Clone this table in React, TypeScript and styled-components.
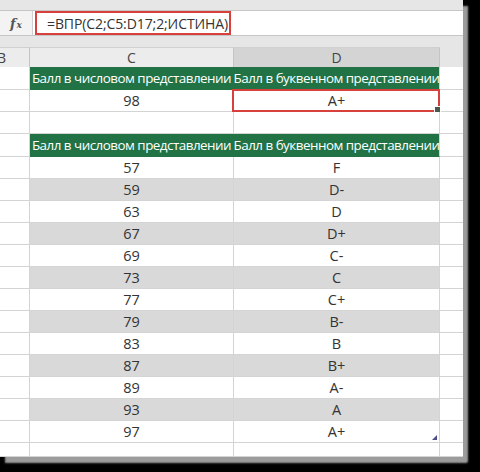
import React from "react";
import styled, { createGlobalStyle } from "styled-components";

const Global = createGlobalStyle`
  html, body { margin: 0; padding: 0; background: #000; }
  body { font-family: "Open Sans", "Noto Sans", sans-serif; }
`;

const Stage = styled.div`
  width: 480px;
  height: 472px;
  background: #000;
  overflow: hidden;
`;

const Panel = styled.div`
  width: 463px;
  height: 457px;
  background: #fff;
  display: flex;
  flex-direction: column;
  overflow: hidden;
  box-shadow: 5px 6px 2px #9c9c9c;
  border-bottom-right-radius: 2px;
`;

const TopBand = styled.div`
  height: 10px;
  background: #e6e6e6;
  border-bottom: 1px solid #c6c6c6;
  flex: none;
`;

const FormulaBar = styled.div`
  height: 24px;
  display: flex;
  flex: none;
  border-bottom: 1px solid #c6c6c6;
`;

const FxCell = styled.div`
  width: 33px;
  background: #f3f3f3;
  border-right: 1px solid #d0d0d0;
  display: flex;
  align-items: center;
  justify-content: center;
  color: #555;
  font-family: "DejaVu Serif", "Liberation Serif", serif;
  font-style: italic;
  font-weight: bold;
  font-size: 13px;
  padding-top: 1px;
  box-sizing: border-box;
`;

const FxX = styled.span`
  font-size: 9px;
  margin-left: 1px;
  margin-top: 3px;
`;

const FormulaArea = styled.div`
  flex: 1;
  background: #fff;
  padding-left: 2px;
  display: flex;
  align-items: stretch;
`;

const FormulaBox = styled.div`
  width: 196px;
  box-sizing: border-box;
  border: 2px solid #d8403c;
  display: flex;
  align-items: center;
  padding-left: 10px;
  font-size: 14px;
  letter-spacing: -0.1px;
  color: #333;
  white-space: nowrap;
`;

const Strip = styled.div`
  height: 11px;
  background: #e6e6e6;
  flex: none;
`;

const Cols = "30px 204px 206px 1fr";

const HeaderRow = styled.div`
  display: grid;
  grid-template-columns: ${Cols};
  height: 20px;
  flex: none;
  background: #e6e6e6;
`;

const ColHead = styled.div<{ $selected?: boolean; $empty?: boolean }>`
  background: ${(p) => (p.$selected ? "#d4d4d4" : p.$empty ? "#e6e6e6" : "#ececec")};
  border-right: ${(p) => (p.$empty ? "none" : "1px solid #c4c4c4")};
  border-top: ${(p) => (p.$empty ? "none" : "1px solid #d0d0d0")};
  color: #444;
  font-size: 14px;
  line-height: 19px;
  text-align: center;
  box-sizing: border-box;
  overflow: hidden;
`;

const ColHeadB = styled(ColHead)`
  text-align: left;
  text-indent: -3px;
`;

type Variant = "head" | "plain" | "band";

const Row = styled.div<{ $h: number }>`
  display: grid;
  grid-template-columns: ${Cols};
  height: ${(p) => p.$h}px;
  flex: none;
`;

const FillRow = styled(Row)`
  flex: 1;
  height: auto;
`;

const Cell = styled.div<{ $v: Variant; $edge?: boolean }>`
  position: relative;
  box-sizing: border-box;
  border-bottom: 1px solid ${(p) => (p.$v === "head" ? "#217346" : "#d4d4d4")};
  border-right: 1px solid
    ${(p) => (p.$v === "head" && !p.$edge ? "#217346" : "#d4d4d4")};
  background: ${(p) =>
    p.$v === "head" ? "#217346" : p.$v === "band" ? "#d9d9d9" : "#fff"};
  color: ${(p) => (p.$v === "head" ? "#fff" : "#333")};
  font-size: ${(p) => (p.$v === "head" ? "13.4px" : "14.5px")};
  letter-spacing: ${(p) => (p.$v === "head" ? "-0.5px" : "0")};
  display: flex;
  align-items: center;
  justify-content: center;
  white-space: nowrap;
  overflow: visible;
`;

const SideCell = styled.div`
  box-sizing: border-box;
  border-bottom: 1px solid #d4d4d4;
  border-right: 1px solid #d4d4d4;
  background: #fff;
`;

const LastSide = styled(SideCell)`
  border-right: none;
`;

const Selection = styled.div`
  position: absolute;
  left: -2px;
  top: -1px;
  right: -1px;
  bottom: -1px;
  border: 2px solid #d8403c;
  pointer-events: none;
`;

const FillHandle = styled.div`
  position: absolute;
  right: -3px;
  bottom: -3px;
  width: 5px;
  height: 5px;
  background: #4a5a4a;
  border: 1px solid #fff;
`;

const ResizeHandle = styled.div`
  position: absolute;
  right: 2px;
  bottom: 2px;
  width: 0;
  height: 0;
  border-left: 5px solid transparent;
  border-bottom: 5px solid #4d4d8a;
`;

const scores: [string, string][] = [
  ["57", "F"],
  ["59", "D-"],
  ["63", "D"],
  ["67", "D+"],
  ["69", "C-"],
  ["73", "C"],
  ["77", "C+"],
  ["79", "B-"],
  ["83", "B"],
  ["87", "B+"],
  ["89", "A-"],
  ["93", "A"],
  ["97", "A+"],
];

const HEAD_C = "Балл в числовом представлении";
const HEAD_D = "Балл в буквенном представлении";

function HeadRow() {
  return (
    <Row $h={23}>
      <SideCell />
      <Cell $v="head">{HEAD_C}</Cell>
      <Cell $v="head" $edge>
        {HEAD_D}
      </Cell>
      <LastSide />
    </Row>
  );
}

export default function App() {
  return (
    <Stage>
      <Global />
      <Panel>
        <TopBand />
        <FormulaBar>
          <FxCell>
            f<FxX>x</FxX>
          </FxCell>
          <FormulaArea>
            <FormulaBox>=ВПР(C2;C5:D17;2;ИСТИНА)</FormulaBox>
          </FormulaArea>
        </FormulaBar>
        <Strip />
        <HeaderRow>
          <ColHeadB>B</ColHeadB>
          <ColHead>C</ColHead>
          <ColHead $selected>D</ColHead>
          <ColHead $empty />
        </HeaderRow>
        <HeadRow />
        <Row $h={22}>
          <SideCell />
          <Cell $v="plain">98</Cell>
          <Cell $v="plain">
            A+
            <Selection>
              <FillHandle />
            </Selection>
          </Cell>
          <LastSide />
        </Row>
        <Row $h={22}>
          <SideCell />
          <Cell $v="plain" />
          <Cell $v="plain" />
          <LastSide />
        </Row>
        <HeadRow />
        {scores.map(([n, g], i) => {
          const v: Variant = i % 2 === 1 ? "band" : "plain";
          return (
            <Row $h={22} key={n}>
              <SideCell />
              <Cell $v={v}>{n}</Cell>
              <Cell $v={v}>
                {g}
                {i === scores.length - 1 && <ResizeHandle />}
              </Cell>
              <LastSide />
            </Row>
          );
        })}
        <FillRow $h={0}>
          <SideCell />
          <Cell $v="plain" />
          <Cell $v="plain" />
          <LastSide />
        </FillRow>
      </Panel>
    </Stage>
  );
}
